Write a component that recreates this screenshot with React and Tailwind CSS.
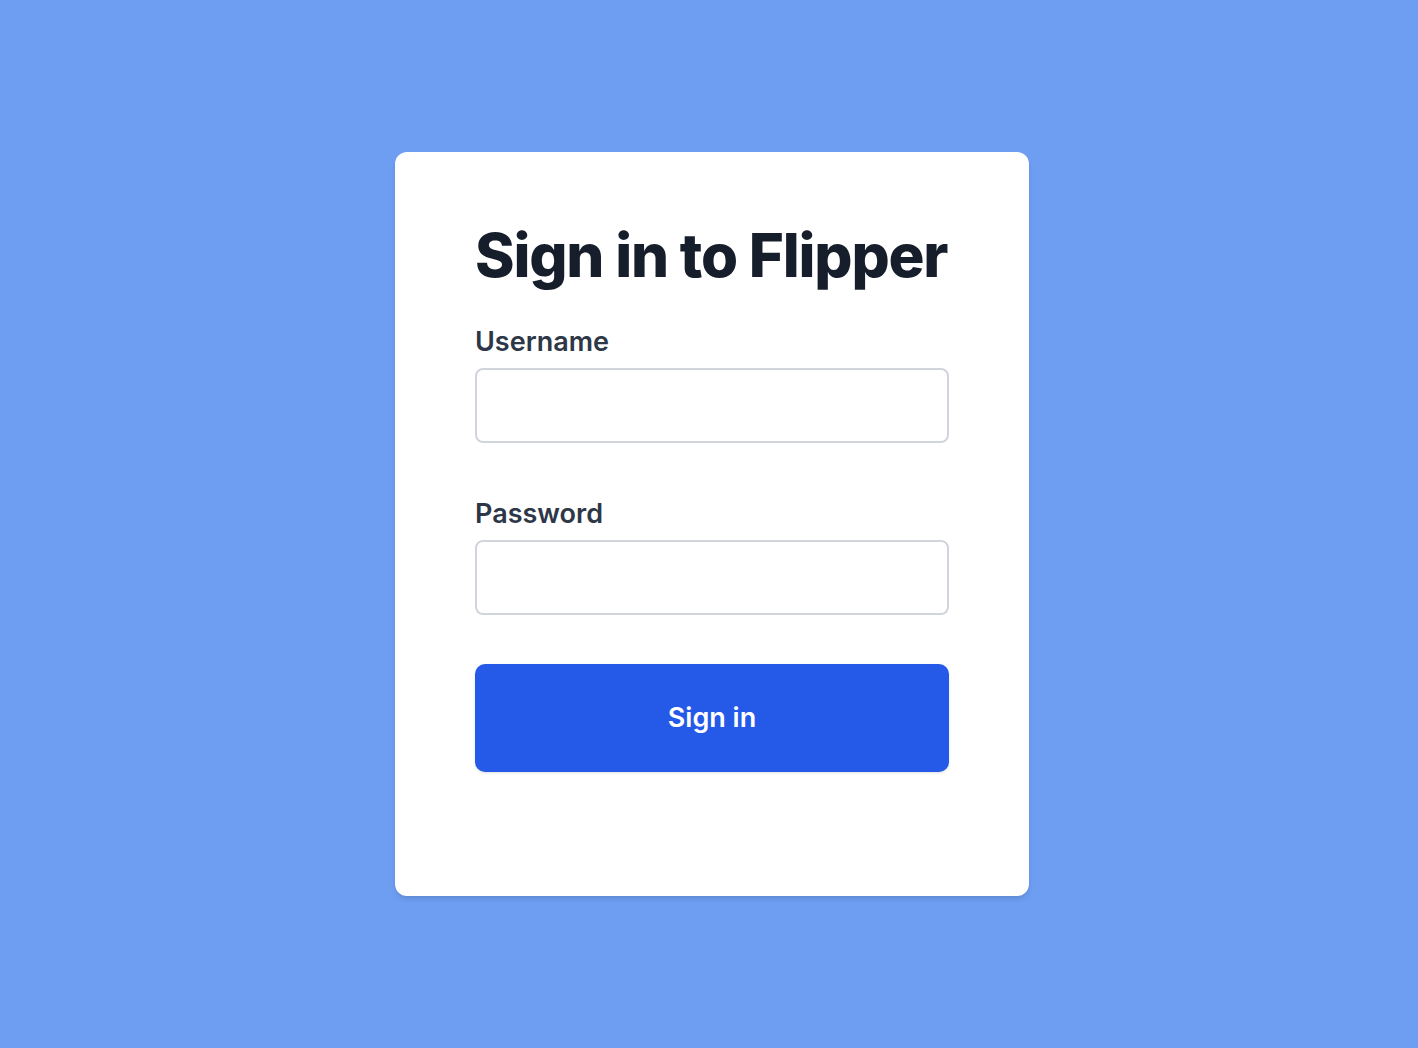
export default function App() {
  return (
    <div className="min-h-screen w-full bg-[#6e9ef2] flex items-center justify-center pl-[6px]" style={{ fontFamily: 'Inter, "Noto Sans", sans-serif' }}>
      <div className="w-[634px] h-[744px] bg-white rounded-xl shadow-md px-[80px] pt-[71px]">
        <h1 className="text-[60px] leading-none font-extrabold text-[#161d2b] tracking-[-0.02em] whitespace-nowrap h-[64px] flex items-center">Sign in to Flipper</h1>
        <form className="mt-[39px]" onSubmit={(e) => e.preventDefault()}>
          <label className="block text-[27px] font-semibold text-[#2d3748] leading-[32px]">Username</label>
          <input type="text" className="mt-[10px] block w-full h-[75px] rounded-lg border-2 border-[#d1d5db] bg-white outline-none" />
          <label className="block mt-[55px] text-[27px] font-semibold text-[#2d3748] leading-[32px]">Password</label>
          <input type="password" className="mt-[10px] block w-full h-[75px] rounded-lg border-2 border-[#d1d5db] bg-white outline-none" />
          <button type="submit" className="mt-[49px] w-full h-[108px] rounded-[10px] bg-[#2559e7] text-white text-[27px] font-semibold shadow-sm">Sign in</button>
        </form>
      </div>
    </div>
  );
}
